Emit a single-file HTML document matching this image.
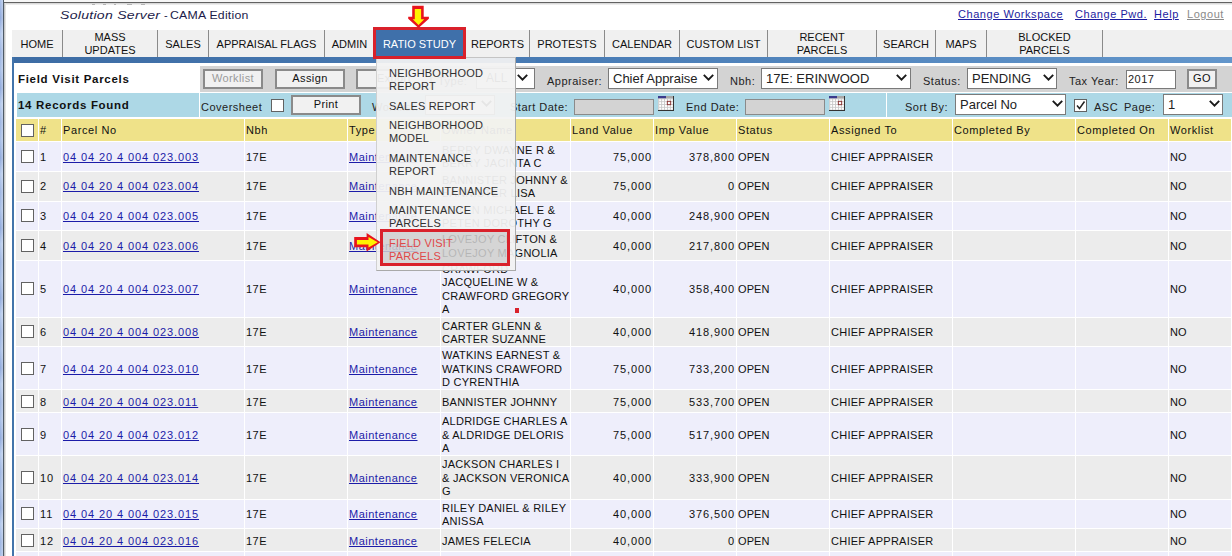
<!DOCTYPE html>
<html><head><meta charset="utf-8">
<style>
*{box-sizing:border-box}
html,body{margin:0;padding:0}
body{width:1232px;height:556px;overflow:hidden;background:#fff;position:relative;font-family:"Liberation Sans",sans-serif;font-size:11px;color:#000}
.a{position:absolute}
/* frame */
#fl{left:0;top:0;width:3px;height:556px;background:linear-gradient(90deg,rgba(255,255,255,0) 0,rgba(255,255,255,0.35) 100%),repeating-linear-gradient(180deg,#a6bde6 0,#8fa9dc 18px,#b3c8ec 34px,#9cb4e2 52px,#a6bde6 70px)}
#fd{left:3px;top:0;width:1px;height:556px;background:#4e5a66}
#fg{left:4px;top:3px;width:2px;height:553px;background:linear-gradient(90deg,#b8b8b8,#f2f2f2)}
#ft{left:3px;top:0;width:1229px;height:2px;background:#f6f6f6}
#ftd{left:3px;top:2px;width:1229px;height:1px;background:#626262}
#ftg{left:4px;top:3px;width:1228px;height:2px;background:linear-gradient(#cfcfcf,#f6f6f6)}
#title{left:60px;top:9px;font-size:11px;line-height:12px;color:#1c1c4a;white-space:nowrap;letter-spacing:0.2px}
#title i{font-size:12px;letter-spacing:0.3px}
#links{top:8px;left:958px;white-space:nowrap;font-size:11px}
#links span{position:absolute;top:0;text-decoration:underline;color:#1c1ca0;letter-spacing:0.55px}
/* nav */
#nav{left:12px;top:30px;width:1220px;height:27px;background:#f0f0f0}
.sep{position:absolute;top:30px;width:1px;height:27px;background:#8a8a8a}
.ni{position:absolute;top:30.8px;height:27px;display:flex;align-items:center;justify-content:center;text-align:center;font-size:11px;line-height:13px;color:#111;letter-spacing:0px;white-space:nowrap}
#blue{left:12px;top:57px;width:1220px;height:6px;background:linear-gradient(90deg,#3d6ca4 0%,#4a7db6 48%,#6396cb 100%)}
#bl{left:12px;top:57px;width:2px;height:499px;background:#4274ab}
/* toolbar */
.gray{background:#d3d3d3}
.lb{background:#add8e6}
.btn{position:absolute;border:2px solid #8a8a8a;background:#f1f1f1;text-align:center;font-size:11px;line-height:15px;color:#111;letter-spacing:0.4px}
.sel{position:absolute;border:1px solid #7a7a7a;background:#fff;font-size:13px;color:#222;white-space:nowrap;overflow:hidden}
.sel span{position:absolute;left:4px;top:1.7px;line-height:15px}
.chev{position:absolute;width:11px;height:7px}
.lbl{position:absolute;font-size:11px;color:#222;white-space:nowrap;letter-spacing:0.5px;line-height:13px}
.cb{position:absolute;width:13px;height:13px;border:1px solid #626262;background:#fff}
.cal{position:absolute;width:16px;height:15px}
.din{position:absolute;border:1px solid #8a8a8a;background:#d3d3d3}
/* table */
#tbl{position:absolute;left:15px;top:118px;border-collapse:separate;border-spacing:1px;table-layout:fixed;background:#fff;width:1217px}
#tbl td{padding:2px 1px 0 1px;font-size:11px;line-height:13.37px;vertical-align:middle;white-space:nowrap;overflow:hidden;letter-spacing:0.1px;color:#111}
#tbl tr.h td{letter-spacing:0.6px}
#tbl td.d{letter-spacing:0.9px}
#tbl td.m{letter-spacing:0.5px}
#tbl tr.h td{background:#efe289;height:22px}
#tbl tr.o td{background:#eeeefb}
#tbl tr.e td{background:#ececec}
#tbl td.r{text-align:right}
#tbl a{color:#1c1ca8;text-decoration:underline}
.tcb{display:block;width:13px;height:13px;border:1px solid #626262;background:#fff;margin-left:4px;position:relative;top:-1px}
/* menu */
.mbg{background:rgba(242,242,242,0.94)}
.mi{position:absolute;left:389px;font-size:11px;line-height:13.4px;color:#303030;letter-spacing:0.2px;white-space:nowrap}
</style></head><body>
<div class="a" id="fl"></div>
<div class="a" id="ft"></div>
<div class="a" id="ftd"></div>
<div class="a" id="ftg"></div>
<div class="a" id="fd"></div>
<div class="a" id="fg"></div>

<div class="a" style="left:92px;top:4px;width:3px;height:1px;background:#b4b4b4"></div><div class="a" style="left:103px;top:4px;width:3px;height:1px;background:#b4b4b4"></div><div class="a" style="left:114px;top:4px;width:2px;height:1px;background:#b4b4b4"></div><div class="a" style="left:127px;top:4px;width:5px;height:1px;background:#b4b4b4"></div><div class="a" style="left:141px;top:4px;width:4px;height:1px;background:#b4b4b4"></div>
<div class="a" id="title"><span style="position:absolute;left:0;top:0;font-style:italic;font-size:10.5px;transform-origin:0 0;transform:scaleX(1.34)">Solution Server</span><span style="position:absolute;left:104px;top:0">-</span><span style="position:absolute;left:110px;top:0;font-size:10.5px;transform-origin:0 0;transform:scaleX(1.17)">CAMA Edition</span></div>
<div class="a" id="links">
<span style="left:0">Change Workspace</span>
<span style="left:117px">Change Pwd.</span>
<span style="left:196px">Help</span>
<span style="left:229px;color:#8a8a8a">Logout</span>
</div>

<!-- nav -->
<div class="a" id="nav"></div>
<div class="ni" style="left:12px;width:50px">HOME</div>
<div class="sep" style="left:62px"></div>
<div class="ni" style="left:63px;width:94px">MASS<br>UPDATES</div>
<div class="sep" style="left:157px"></div>
<div class="ni" style="left:158px;width:50px">SALES</div>
<div class="sep" style="left:208px"></div>
<div class="ni" style="left:209px;width:115px">APPRAISAL FLAGS</div>
<div class="sep" style="left:324px"></div>
<div class="ni" style="left:325px;width:49px">ADMIN</div>
<div class="a" style="left:376px;top:30px;width:87px;height:27px;background:#3f70aa"></div>
<div class="ni" style="left:376px;width:87px;color:#fff">RATIO STUDY</div>
<div class="sep" style="left:529px"></div>
<div class="ni" style="left:466px;width:63px">REPORTS</div>
<div class="sep" style="left:604px"></div>
<div class="ni" style="left:530px;width:74px">PROTESTS</div>
<div class="sep" style="left:679px"></div>
<div class="ni" style="left:605px;width:74px">CALENDAR</div>
<div class="sep" style="left:767px"></div>
<div class="ni" style="left:680px;width:87px">CUSTOM LIST</div>
<div class="sep" style="left:876px"></div>
<div class="ni" style="left:768px;width:108px">RECENT<br>PARCELS</div>
<div class="sep" style="left:935px"></div>
<div class="ni" style="left:877px;width:58px">SEARCH</div>
<div class="sep" style="left:986px"></div>
<div class="ni" style="left:936px;width:50px">MAPS</div>
<div class="sep" style="left:1102px"></div>
<div class="ni" style="left:987px;width:115px">BLOCKED<br>PARCELS</div>
<div class="a" id="blue"></div>
<div class="a" id="bl"></div>

<!-- toolbar row 1 -->
<div class="a" style="left:16px;top:66px;width:183px;height:26px;background:#fff"></div>
<div class="a" style="left:18px;top:72px;font-size:11.5px;font-weight:bold;color:#111;letter-spacing:0.7px;line-height:14px">Field Visit Parcels</div>
<div class="a gray" style="left:200px;top:66px;width:1032px;height:26px"></div>
<div class="btn" style="left:203px;top:69px;width:60px;height:20px;color:#9a9a9a">Worklist</div>
<div class="btn" style="left:275px;top:69px;width:70px;height:20px">Assign</div>
<div class="btn" style="left:356px;top:69px;width:76px;height:20px">Export</div>
<div class="lbl" style="left:438px;top:75px">Type:</div>
<div class="sel" style="left:476px;top:68px;width:59px;height:21px"><span style="left:9px;font-size:12px">ALL</span></div>

<div class="lbl" style="left:547px;top:75px">Appraiser:</div>
<div class="sel" style="left:608px;top:68px;width:110px;height:21px"><span>Chief Appraise</span></div>
<div class="lbl" style="left:730px;top:75px">Nbh:</div>
<div class="sel" style="left:761px;top:68px;width:150px;height:21px"><span>17E: ERINWOOD</span></div>
<div class="lbl" style="left:923px;top:75px">Status:</div>
<div class="sel" style="left:967px;top:68px;width:90px;height:21px"><span>PENDING</span></div>
<div class="lbl" style="left:1069px;top:75px">Tax Year:</div>
<div class="a" style="left:1126px;top:70px;width:50px;height:19px;border:1px solid #7a7a7a;background:#fff;font-size:11px;line-height:16px;padding-left:1px;color:#222;letter-spacing:0.5px">2017</div>
<div class="btn" style="left:1187px;top:69px;width:30px;height:20px">GO</div>

<!-- toolbar row 2 -->
<div class="a lb" style="left:17px;top:93px;width:182px;height:23.5px"></div>
<div class="a" style="left:18px;top:98px;font-size:11.5px;font-weight:bold;color:#111;letter-spacing:0.7px;line-height:14px">14 Records Found</div>
<div class="a lb" style="left:200px;top:93px;width:686px;height:23.5px"></div>
<div class="a lb" style="left:887px;top:93px;width:345px;height:23.5px"></div>
<div class="lbl" style="left:201px;top:101px">Coversheet</div>
<div class="cb" style="left:271px;top:99px"></div>
<div class="btn" style="left:291px;top:95px;width:70px;height:20px">Print</div>
<div class="lbl" style="left:372px;top:101px">Worklist:</div>
<div class="sel" style="left:425px;top:95px;width:70px;height:20px"><span></span></div>
<div class="lbl" style="left:510px;top:101px">Start Date:</div>
<div class="din" style="left:574px;top:99px;width:80px;height:16px"></div>
<div class="lbl" style="left:686px;top:101px">End Date:</div>
<div class="din" style="left:745px;top:99px;width:80px;height:16px"></div>
<div class="lbl" style="left:905px;top:101px">Sort By:</div>
<div class="sel" style="left:955px;top:94px;width:111px;height:21px"><span>Parcel No</span></div>
<div class="cb" style="left:1074px;top:99px"></div>
<div class="lbl" style="left:1094px;top:101px">ASC</div>
<div class="lbl" style="left:1124px;top:101px">Page:</div>
<div class="sel" style="left:1163px;top:94px;width:60px;height:21px"><span>1</span></div>

<svg class="chev" style="left:517px;top:74px" viewBox="0 0 11 7"><path d="M0.8 0.8 L5.5 5.6 L10.2 0.8" fill="none" stroke="#1a1a1a" stroke-width="1.9"/></svg>
<svg class="chev" style="left:703px;top:74px" viewBox="0 0 11 7"><path d="M0.8 0.8 L5.5 5.6 L10.2 0.8" fill="none" stroke="#1a1a1a" stroke-width="1.9"/></svg>
<svg class="chev" style="left:896px;top:74px" viewBox="0 0 11 7"><path d="M0.8 0.8 L5.5 5.6 L10.2 0.8" fill="none" stroke="#1a1a1a" stroke-width="1.9"/></svg>
<svg class="chev" style="left:1043px;top:74px" viewBox="0 0 11 7"><path d="M0.8 0.8 L5.5 5.6 L10.2 0.8" fill="none" stroke="#1a1a1a" stroke-width="1.9"/></svg>
<svg class="chev" style="left:1052px;top:100px" viewBox="0 0 11 7"><path d="M0.8 0.8 L5.5 5.6 L10.2 0.8" fill="none" stroke="#1a1a1a" stroke-width="1.9"/></svg>
<svg class="chev" style="left:1209px;top:100px" viewBox="0 0 11 7"><path d="M0.8 0.8 L5.5 5.6 L10.2 0.8" fill="none" stroke="#1a1a1a" stroke-width="1.9"/></svg>
<svg class="chev" style="left:481px;top:100px" viewBox="0 0 11 7"><path d="M0.8 0.8 L5.5 5.6 L10.2 0.8" fill="none" stroke="#1a1a1a" stroke-width="1.9"/></svg>
<svg class="cal" style="left:658px;top:96px" viewBox="0 0 16 15"><rect x="0" y="0" width="16" height="15" fill="#ddd"/><rect x="0" y="0" width="8" height="2.5" fill="#3a3a8c"/><rect x="8" y="0" width="7" height="2.5" fill="#a8a8a8"/><rect x="0.5" y="2.5" width="14.5" height="11.5" fill="#c8c8c8"/><rect x="1.2" y="3.3" width="2" height="2" fill="#fff"/><rect x="1.2" y="6.1" width="2" height="2" fill="#fff"/><rect x="1.2" y="8.9" width="2" height="2" fill="#fff"/><rect x="1.2" y="11.7" width="2" height="2" fill="#fff"/><rect x="4.1" y="3.3" width="2" height="2" fill="#fff"/><rect x="4.1" y="6.1" width="2" height="2" fill="#fff"/><rect x="4.1" y="8.9" width="2" height="2" fill="#fff"/><rect x="4.1" y="11.7" width="2" height="2" fill="#fff"/><rect x="7.0" y="3.3" width="2" height="2" fill="#fff"/><rect x="7.0" y="6.1" width="2" height="2" fill="#fff"/><rect x="7.0" y="8.9" width="2" height="2" fill="#fff"/><rect x="7.0" y="11.7" width="2" height="2" fill="#fff"/><rect x="9.9" y="3.3" width="2" height="2" fill="#fff"/><rect x="9.9" y="6.1" width="2" height="2" fill="#fff"/><rect x="9.9" y="8.9" width="2" height="2" fill="#fff"/><rect x="9.9" y="11.7" width="2" height="2" fill="#fff"/><rect x="12.8" y="3.3" width="2" height="2" fill="#fff"/><rect x="12.8" y="6.1" width="2" height="2" fill="#fff"/><rect x="12.8" y="8.9" width="2" height="2" fill="#fff"/><rect x="12.8" y="11.7" width="2" height="2" fill="#fff"/><rect x="15" y="0" width="1" height="15" fill="#333"/><rect x="0" y="14" width="16" height="1" fill="#333"/><rect x="9.3" y="5.3" width="3.4" height="3.4" fill="none" stroke="#8a3030" stroke-width="0.9"/></svg>
<svg class="cal" style="left:829px;top:96px" viewBox="0 0 16 15"><rect x="0" y="0" width="16" height="15" fill="#ddd"/><rect x="0" y="0" width="8" height="2.5" fill="#3a3a8c"/><rect x="8" y="0" width="7" height="2.5" fill="#a8a8a8"/><rect x="0.5" y="2.5" width="14.5" height="11.5" fill="#c8c8c8"/><rect x="1.2" y="3.3" width="2" height="2" fill="#fff"/><rect x="1.2" y="6.1" width="2" height="2" fill="#fff"/><rect x="1.2" y="8.9" width="2" height="2" fill="#fff"/><rect x="1.2" y="11.7" width="2" height="2" fill="#fff"/><rect x="4.1" y="3.3" width="2" height="2" fill="#fff"/><rect x="4.1" y="6.1" width="2" height="2" fill="#fff"/><rect x="4.1" y="8.9" width="2" height="2" fill="#fff"/><rect x="4.1" y="11.7" width="2" height="2" fill="#fff"/><rect x="7.0" y="3.3" width="2" height="2" fill="#fff"/><rect x="7.0" y="6.1" width="2" height="2" fill="#fff"/><rect x="7.0" y="8.9" width="2" height="2" fill="#fff"/><rect x="7.0" y="11.7" width="2" height="2" fill="#fff"/><rect x="9.9" y="3.3" width="2" height="2" fill="#fff"/><rect x="9.9" y="6.1" width="2" height="2" fill="#fff"/><rect x="9.9" y="8.9" width="2" height="2" fill="#fff"/><rect x="9.9" y="11.7" width="2" height="2" fill="#fff"/><rect x="12.8" y="3.3" width="2" height="2" fill="#fff"/><rect x="12.8" y="6.1" width="2" height="2" fill="#fff"/><rect x="12.8" y="8.9" width="2" height="2" fill="#fff"/><rect x="12.8" y="11.7" width="2" height="2" fill="#fff"/><rect x="15" y="0" width="1" height="15" fill="#333"/><rect x="0" y="14" width="16" height="1" fill="#333"/><rect x="9.3" y="5.3" width="3.4" height="3.4" fill="none" stroke="#8a3030" stroke-width="0.9"/></svg>
<svg class="a" style="left:1075px;top:100px;width:11px;height:11px" viewBox="0 0 11 11"><path d="M2 5.5 L4.5 8.5 L9.5 1.5" fill="none" stroke="#222" stroke-width="1.5"/></svg>
<table id="tbl"><colgroup><col style="width:22px"><col style="width:22px"><col style="width:182px"><col style="width:102px"><col style="width:92px"><col style="width:129px"><col style="width:82px"><col style="width:82px"><col style="width:92px"><col style="width:122px"><col style="width:122px"><col style="width:92px"><col style="width:62px"></colgroup><tr class="h"><td><span class="tcb"></span></td><td>#</td><td>Parcel No</td><td>Nbh</td><td>Type</td><td>Owner Name</td><td>Land Value</td><td>Imp Value</td><td>Status</td><td>Assigned To</td><td>Completed By</td><td>Completed On</td><td>Worklist</td></tr><tr class="o" style="height:28.74px"><td><span class="tcb"></span></td><td class="d">1</td><td class="d"><a>04 04 20 4 004 023.003</a></td><td class="m">17E</td><td class="m"><a>Maintenance</a></td><td style="letter-spacing:0.25px">BERRY DWAYNE R &<br>BERRY JACINTA C</td><td class="r d">75,000</td><td class="r d">378,800</td><td>OPEN</td><td style="letter-spacing:0.27px">CHIEF APPRAISER</td><td></td><td></td><td>NO</td></tr><tr class="e" style="height:28.74px"><td><span class="tcb"></span></td><td class="d">2</td><td class="d"><a>04 04 20 4 004 023.004</a></td><td class="m">17E</td><td class="m"><a>Maintenance</a></td><td style="letter-spacing:0.25px">BANNISTER JOHNNY &<br>BANNISTER LISA</td><td class="r d">75,000</td><td class="r d">0</td><td>OPEN</td><td style="letter-spacing:0.27px">CHIEF APPRAISER</td><td></td><td></td><td>NO</td></tr><tr class="o" style="height:28.74px"><td><span class="tcb"></span></td><td class="d">3</td><td class="d"><a>04 04 20 4 004 023.005</a></td><td class="m">17E</td><td class="m"><a>Maintenance</a></td><td style="letter-spacing:0.25px">PETEN MICHAEL E &<br>PETEN DOROTHY G</td><td class="r d">40,000</td><td class="r d">248,900</td><td>OPEN</td><td style="letter-spacing:0.27px">CHIEF APPRAISER</td><td></td><td></td><td>NO</td></tr><tr class="e" style="height:28.74px"><td><span class="tcb"></span></td><td class="d">4</td><td class="d"><a>04 04 20 4 004 023.006</a></td><td class="m">17E</td><td class="m"><a>Maintenance</a></td><td style="letter-spacing:0.25px">LOVEJOY CLIFTON &<br>LOVEJOY MAGNOLIA</td><td class="r d">40,000</td><td class="r d">217,800</td><td>OPEN</td><td style="letter-spacing:0.27px">CHIEF APPRAISER</td><td></td><td></td><td>NO</td></tr><tr class="o" style="height:55.48px"><td><span class="tcb"></span></td><td class="d">5</td><td class="d"><a>04 04 20 4 004 023.007</a></td><td class="m">17E</td><td class="m"><a>Maintenance</a></td><td style="letter-spacing:0.25px">CRAWFORD<br>JACQUELINE W &<br>CRAWFORD GREGORY<br>A</td><td class="r d">40,000</td><td class="r d">358,400</td><td>OPEN</td><td style="letter-spacing:0.27px">CHIEF APPRAISER</td><td></td><td></td><td>NO</td></tr><tr class="e" style="height:28.74px"><td><span class="tcb"></span></td><td class="d">6</td><td class="d"><a>04 04 20 4 004 023.008</a></td><td class="m">17E</td><td class="m"><a>Maintenance</a></td><td style="letter-spacing:0.25px">CARTER GLENN &<br>CARTER SUZANNE</td><td class="r d">40,000</td><td class="r d">418,900</td><td>OPEN</td><td style="letter-spacing:0.27px">CHIEF APPRAISER</td><td></td><td></td><td>NO</td></tr><tr class="o" style="height:42.11px"><td><span class="tcb"></span></td><td class="d">7</td><td class="d"><a>04 04 20 4 004 023.010</a></td><td class="m">17E</td><td class="m"><a>Maintenance</a></td><td style="letter-spacing:0.25px">WATKINS EARNEST &<br>WATKINS CRAWFORD<br>D CYRENTHIA</td><td class="r d">75,000</td><td class="r d">733,200</td><td>OPEN</td><td style="letter-spacing:0.27px">CHIEF APPRAISER</td><td></td><td></td><td>NO</td></tr><tr class="e" style="height:21.95px"><td><span class="tcb"></span></td><td class="d">8</td><td class="d"><a>04 04 20 4 004 023.011</a></td><td class="m">17E</td><td class="m"><a>Maintenance</a></td><td style="letter-spacing:0.25px">BANNISTER JOHNNY</td><td class="r d">75,000</td><td class="r d">533,700</td><td>OPEN</td><td style="letter-spacing:0.27px">CHIEF APPRAISER</td><td></td><td></td><td>NO</td></tr><tr class="o" style="height:42.11px"><td><span class="tcb"></span></td><td class="d">9</td><td class="d"><a>04 04 20 4 004 023.012</a></td><td class="m">17E</td><td class="m"><a>Maintenance</a></td><td style="letter-spacing:0.25px">ALDRIDGE CHARLES A<br>& ALDRIDGE DELORIS<br>A</td><td class="r d">75,000</td><td class="r d">517,900</td><td>OPEN</td><td style="letter-spacing:0.27px">CHIEF APPRAISER</td><td></td><td></td><td>NO</td></tr><tr class="e" style="height:42.11px"><td><span class="tcb"></span></td><td class="d">10</td><td class="d"><a>04 04 20 4 004 023.014</a></td><td class="m">17E</td><td class="m"><a>Maintenance</a></td><td style="letter-spacing:0.25px">JACKSON CHARLES I<br>& JACKSON VERONICA<br>G</td><td class="r d">40,000</td><td class="r d">333,900</td><td>OPEN</td><td style="letter-spacing:0.27px">CHIEF APPRAISER</td><td></td><td></td><td>NO</td></tr><tr class="o" style="height:28.74px"><td><span class="tcb"></span></td><td class="d">11</td><td class="d"><a>04 04 20 4 004 023.015</a></td><td class="m">17E</td><td class="m"><a>Maintenance</a></td><td style="letter-spacing:0.25px">RILEY DANIEL & RILEY<br>ANISSA</td><td class="r d">40,000</td><td class="r d">376,500</td><td>OPEN</td><td style="letter-spacing:0.27px">CHIEF APPRAISER</td><td></td><td></td><td>NO</td></tr><tr class="e" style="height:21.95px"><td><span class="tcb"></span></td><td class="d">12</td><td class="d"><a>04 04 20 4 004 023.016</a></td><td class="m">17E</td><td class="m"><a>Maintenance</a></td><td style="letter-spacing:0.25px">JAMES FELECIA</td><td class="r d">40,000</td><td class="r d">0</td><td>OPEN</td><td style="letter-spacing:0.27px">CHIEF APPRAISER</td><td></td><td></td><td>NO</td></tr><tr class="o" style="height:21.95px"><td><span class="tcb"></span></td><td class="d">13</td><td class="d"><a>04 04 20 4 004 023.017</a></td><td class="m">17E</td><td class="m"><a>Maintenance</a></td><td style="letter-spacing:0.25px">SMITH JOHN</td><td class="r d">40,000</td><td class="r d">100,000</td><td>OPEN</td><td style="letter-spacing:0.27px">CHIEF APPRAISER</td><td></td><td></td><td>NO</td></tr></table>
<div class="a mbg" style="left:376px;top:57px;width:140px;height:172px;border:1px solid #a9a9a9;border-left-color:#d0d0d0;border-top-color:#c4c4c4;border-bottom:none"></div>
<div class="a mbg" style="left:376px;top:229px;width:4px;height:37px;border-left:1px solid #d0d0d0"></div>
<div class="a mbg" style="left:510px;top:229px;width:6px;height:37px;border-right:1px solid #a9a9a9"></div>
<div class="a mbg" style="left:376px;top:266px;width:140px;height:4.5px;border:1px solid #a9a9a9;border-left-color:#d0d0d0;border-top:none"></div>
<div class="mi" style="top:66.5px">NEIGHBORHOOD<br>REPORT</div>
<div class="mi" style="top:99.5px">SALES REPORT</div>
<div class="mi" style="top:118.5px">NEIGHBORHOOD<br>MODEL</div>
<div class="mi" style="top:151.5px">MAINTENANCE<br>REPORT</div>
<div class="mi" style="top:184.5px">NBH MAINTENANCE</div>
<div class="mi" style="top:203.5px">MAINTENANCE<br>PARCELS</div>
<div class="a" style="left:380px;top:229px;width:130px;height:37px;border:3px solid #d9212b;background:rgba(208,208,208,0.86)"></div>
<div class="mi" style="top:236.5px;color:#e04848">FIELD VISIT<br>PARCELS</div>
<div class="a" style="left:373px;top:27px;width:93px;height:32px;border:3px solid #d9212b"></div>
<svg class="a" style="left:406px;top:4px;width:25px;height:25px" viewBox="0 0 25 25"><path d="M6.2 1.7 H17.7 V12.7 H22.9 V14.7 L12.5 24 L2.2 14.7 V12.7 H6.2 Z" fill="#e8141c"/><path d="M8.8 4.9 H15.1 V15.3 H18.3 L12.5 21 L6.7 15.3 H8.8 Z" fill="#fff200"/></svg>
<svg class="a" style="left:352px;top:231px;width:30px;height:22px" viewBox="0 0 30 22"><path d="M2.2 6.1 H14.6 V2 L28.6 11.2 L14.6 20.4 V16.3 H2.2 Z" fill="#e8141c"/><path d="M4.9 9 H16.5 V6 L25.7 11.2 L16.5 16.6 V13.6 H4.9 Z" fill="#fff200"/></svg>
<div class="a" style="left:515px;top:308px;width:4px;height:5px;background:#d9212b"></div>

</body></html>
